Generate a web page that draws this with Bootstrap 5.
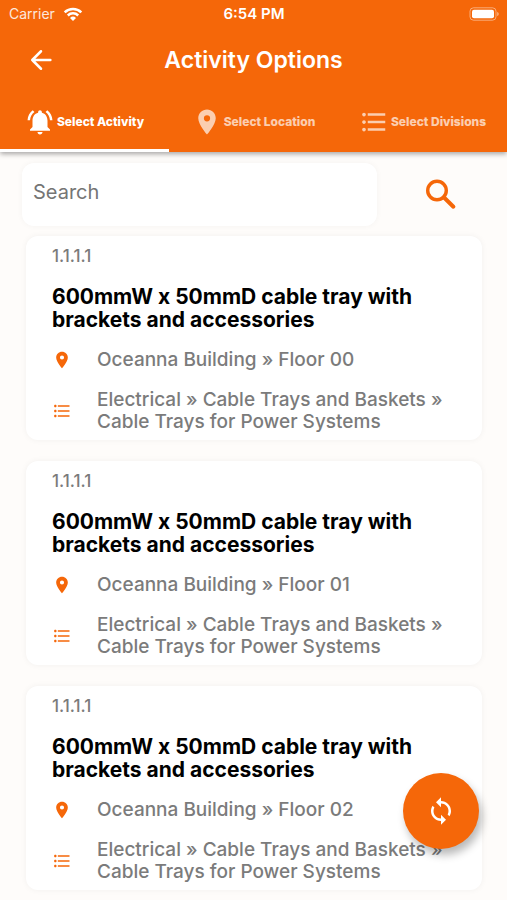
<!DOCTYPE html>
<html lang="en">
<head>
<meta charset="utf-8">
<meta name="viewport" content="width=device-width, initial-scale=1">
<title>Activity Options</title>
<link href="https://cdn.jsdelivr.net/npm/bootstrap@5.3.0/dist/css/bootstrap.min.css" rel="stylesheet">
<style>
  :root { --brand: #f56709; }
  body { background: #fefcfa; font-family: "Inter", "Liberation Sans", sans-serif; color: #000; }
  svg { display: block; flex: none; fill: currentColor; }
  .app-header { background: var(--brand); color: #fff; box-shadow: 0 2px 5px rgba(0, 0, 0, .35); z-index: 2; }
  .status-bar { height: 28px; padding: 0 8px 0 9px; font-size: 14px; line-height: 20px; }
  .status-side { flex: 1 1 0; }
  .status-time { font-size: 15px; font-weight: 600; }
  .carrier { opacity: .85; }
  .title-bar { height: 63px; padding: 0 26px; }
  .title-bar h1 { font-size: 23px; line-height: 28px; font-weight: 600; }
  .title-bar .side { width: 30px; }
  .app-tab { height: 61px; font-size: 12px; line-height: 16px; font-weight: 800; color: #fff; gap: 2px; border: 0; border-bottom: 3px solid transparent; background: none; padding: 3px 0 0; white-space: nowrap; }
  .app-tab > * { opacity: .68; }
  .app-tab.active { border-bottom-color: #fff; }
  .app-tab.active > * { opacity: 1; }
  .search-row { padding: 11px 26px 10px 22px; }
  .search-box { height: 63px; border: 0; border-radius: 12px; padding: 0 11px 6px; font-size: 20px; color: #444; box-shadow: 0 0 6px rgba(0, 0, 0, .04); }
  .search-box::placeholder { color: #757575; opacity: 1; }
  .search-slot { width: 104px; padding-left: 24px; }
  .search-btn { color: var(--brand); }
  .activity-list { padding: 0 25px 10px 26px; gap: 21px; }
  .activity { border: 0; border-radius: 12px; padding: 10px 20px 7px 26px; box-shadow: 0 0 6px rgba(0, 0, 0, .05); color: #7b7b7b; font-size: 19px; line-height: 22px; font-weight: 500; }
  .activity .code { font-size: 17px; line-height: 20px; margin-bottom: 19px; }
  .activity h2 { font-size: 21px; line-height: 23px; font-weight: 700; color: #000; margin-bottom: 18px; }
  .detail { gap: 25px; }
  .detail + .detail { margin-top: 18px; }
  .detail svg { color: var(--brand); }
  .sync-btn { width: 76px; height: 76px; right: 28px; bottom: 51px; background: var(--brand); color: #fff; box-shadow: 3px 6px 9px rgba(0, 0, 0, .28); z-index: 3; }
</style>
<script src="https://cdn.jsdelivr.net/npm/bootstrap@5.3.0/dist/js/bootstrap.bundle.min.js" defer></script>
</head>
<body>
<svg class="d-none" aria-hidden="true">
  <symbol id="pin" viewBox="0 0 24 24"><path d="M12 2C8.130 2 5 5.130 5 9c0 5.250 7 13 7 13s7-7.750 7-13c0-3.870-3.130-7-7-7zm0 9.500a2.500 2.500 0 0 1 0-5 2.500 2.500 0 0 1 0 5z"/></symbol>
  <symbol id="list" viewBox="0 0 24 24"><path d="M4 10.500c-.83 0-1.500.67-1.500 1.500s.67 1.500 1.500 1.500 1.500-.67 1.500-1.500-.67-1.500-1.500-1.500zm0-6c-.83 0-1.500.67-1.500 1.500S3.170 7.500 4 7.500 5.500 6.830 5.500 6 4.830 4.500 4 4.500zm0 12c-.83 0-1.500.68-1.500 1.500s.68 1.500 1.500 1.500 1.500-.68 1.500-1.500-.67-1.500-1.500-1.500zM7 19h14v-2H7v2zm0-6h14v-2H7v2zm0-8v2h14V5H7z"/></symbol>
</svg>

<header class="app-header position-relative">
  <div class="status-bar d-flex align-items-center">
    <div class="status-side d-flex align-items-center gap-2">
      <span class="carrier">Carrier</span>
      <svg width="20" height="16" viewBox="0 0 20 16" role="img" aria-label="Wi-Fi"><g fill="none" stroke="#fff" stroke-width="2.500"><path d="M1.700 6.300a11.800 11.800 0 0 1 16.600 0M4.800 9.500a7.400 7.400 0 0 1 10.400 0"/></g><path d="M10 15l-3-3.100a4.300 4.300 0 0 1 6 0z"/></svg>
    </div>
    <span class="status-time">6:54 PM</span>
    <div class="status-side d-flex justify-content-end">
      <svg width="30" height="14" viewBox="0 0 30 14" role="img" aria-label="Battery full"><rect x="1" y=".8" width="26" height="12.400" rx="3.500" fill="none" stroke="#fff" stroke-opacity=".45"/><rect x="3" y="2.700" width="22" height="8.600" rx="2"/><path d="M28.200 5v4c1-.3 1.500-1.100 1.500-2s-.5-1.700-1.500-2z" opacity=".5"/></svg>
    </div>
  </div>
  <div class="title-bar d-flex align-items-center justify-content-between">
    <button type="button" class="btn p-0 border-0 text-white side" aria-label="Back">
      <svg width="30" height="30" viewBox="0 0 24 24"><path d="M12 5l-7 7 7 7M5 12h14.500" fill="none" stroke="currentColor" stroke-width="2" stroke-linecap="round" stroke-linejoin="round"/></svg>
    </button>
    <h1 class="m-0">Activity Options</h1>
    <span class="side"></span>
  </div>
  <nav class="row g-0" aria-label="Steps">
    <button type="button" class="app-tab active col d-flex align-items-center justify-content-center" aria-current="page">
      <svg width="30" height="30" viewBox="0 0 24 24"><path d="M7.580 4.080L6.150 2.650C3.750 4.480 2.170 7.300 2.030 10.500h2c.15-2.650 1.510-4.970 3.550-6.420zm12.390 6.420h2c-.15-3.200-1.730-6.020-4.120-7.850l-1.420 1.430c2.020 1.450 3.390 3.770 3.540 6.420zM18 11c0-3.070-1.640-5.640-4.500-6.320V4c0-.83-.67-1.500-1.500-1.500s-1.500.67-1.500 1.500v.68C7.630 5.360 6 7.920 6 11v5l-2 2v1h16v-1l-2-2v-5zm-6 11c1.100 0 2-.9 2-2h-4c0 1.100.9 2 2 2z"/></svg>
      <span>Select Activity</span>
    </button>
    <button type="button" class="app-tab col d-flex align-items-center justify-content-center">
      <svg width="30" height="30"><use href="#pin"/></svg><span>Select Location</span>
    </button>
    <button type="button" class="app-tab col d-flex align-items-center justify-content-center">
      <svg width="30" height="30"><use href="#list"/></svg><span>Select Divisions</span>
    </button>
  </nav>
</header>

<main>
  <form class="search-row d-flex align-items-center" role="search">
    <input id="q" type="text" class="form-control search-box flex-fill" placeholder="Search" aria-label="Search">
    <div class="search-slot flex-shrink-0 d-flex justify-content-center">
      <button type="button" class="search-btn btn p-0 border-0" aria-label="Search">
        <svg width="40" height="40" viewBox="0 0 40 40"><circle cx="16" cy="15.500" r="9.300" fill="none" stroke="currentColor" stroke-width="3.400"/><path d="M22.800 22.300l9.600 9.400" fill="none" stroke="currentColor" stroke-width="4" stroke-linecap="round"/></svg>
      </button>
    </div>
  </form>

  <div class="activity-list d-flex flex-column">
    <article class="card activity">
      <div class="code">1.1.1.1</div>
      <h2>600mmW x 50mmD cable tray with brackets and accessories</h2>
      <div class="detail d-flex align-items-center"><svg width="20" height="20"><use href="#pin"/></svg><span>Oceanna Building » Floor 00</span></div>
      <div class="detail d-flex align-items-center"><svg width="20" height="20"><use href="#list"/></svg><span>Electrical » Cable Trays and Baskets » Cable Trays for Power Systems</span></div>
    </article>
    <article class="card activity">
      <div class="code">1.1.1.1</div>
      <h2>600mmW x 50mmD cable tray with brackets and accessories</h2>
      <div class="detail d-flex align-items-center"><svg width="20" height="20"><use href="#pin"/></svg><span>Oceanna Building » Floor 01</span></div>
      <div class="detail d-flex align-items-center"><svg width="20" height="20"><use href="#list"/></svg><span>Electrical » Cable Trays and Baskets » Cable Trays for Power Systems</span></div>
    </article>
    <article class="card activity">
      <div class="code">1.1.1.1</div>
      <h2>600mmW x 50mmD cable tray with brackets and accessories</h2>
      <div class="detail d-flex align-items-center"><svg width="20" height="20"><use href="#pin"/></svg><span>Oceanna Building » Floor 02</span></div>
      <div class="detail d-flex align-items-center"><svg width="20" height="20"><use href="#list"/></svg><span>Electrical » Cable Trays and Baskets » Cable Trays for Power Systems</span></div>
    </article>
  </div>
</main>

<button type="button" class="sync-btn position-fixed rounded-circle border-0 d-flex align-items-center justify-content-center" aria-label="Sync">
  <svg width="30" height="30" viewBox="0 0 24 24"><path d="M12 4V1L8 5l4 4V6c3.310 0 6 2.690 6 6 0 1.010-.25 1.970-.7 2.800l1.460 1.460C19.540 15.030 20 13.570 20 12c0-4.420-3.580-8-8-8zm0 14c-3.310 0-6-2.690-6-6 0-1.010.25-1.970.7-2.800L5.240 7.740C4.460 8.970 4 10.430 4 12c0 4.420 3.580 8 8 8v3l4-4-4-4v3z"/></svg>
</button>
</body>
</html>
